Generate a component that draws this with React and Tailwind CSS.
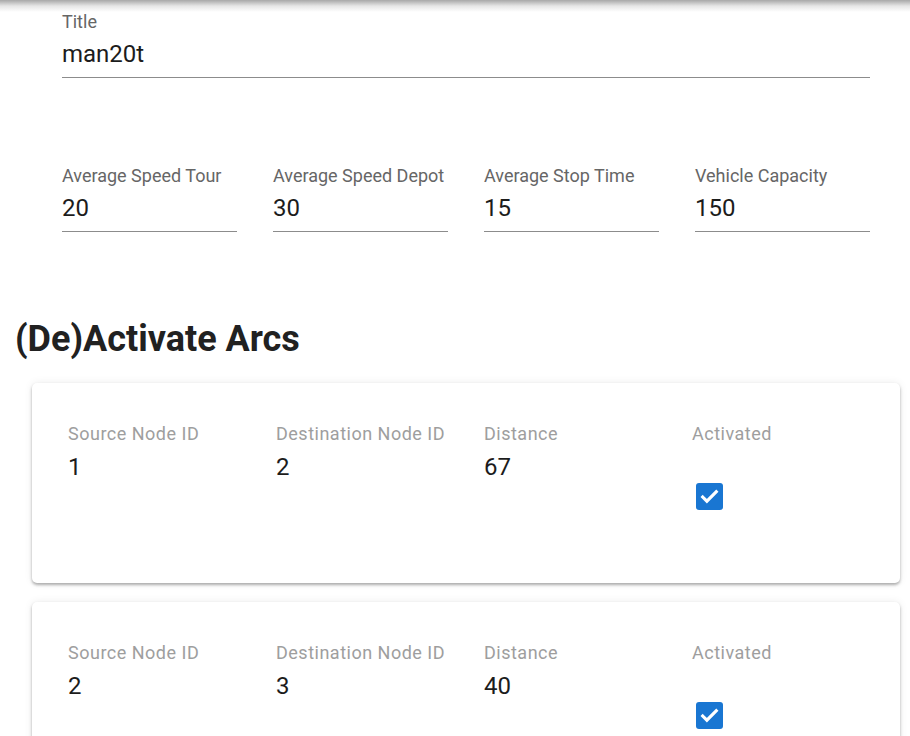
import React from 'react'

const font = { fontFamily: 'Roboto, "Noto Sans", sans-serif' }

const SETTINGS = [
  { label: 'Average Speed Tour', value: '20' },
  { label: 'Average Speed Depot', value: '30' },
  { label: 'Average Stop Time', value: '15' },
  { label: 'Vehicle Capacity', value: '150' }
]

const ARCS = [
  { source: 1, dest: 2, distance: 67, active: true },
  { source: 2, dest: 3, distance: 40, active: true }
]

function Field({ label, value }) {
  return (
    <div className="flex flex-col border-b border-[#8c8c8c]">
      <span className="text-[18px] leading-[22px] text-[#666]">{label}</span>
      <span className="text-[24px] leading-[28px] text-[#1c1c1c] pt-[7px] pb-[9px]">{value}</span>
    </div>
  )
}

function Checkbox({ checked }) {
  return (
    <div className="w-[27px] h-[27px] rounded-[3px] bg-[#1976d2] flex items-center justify-center">
      {checked && (
        <svg viewBox="0 0 24 24" className="w-[25px] h-[25px]" fill="none" stroke="white" strokeWidth="3" strokeLinecap="square">
          <path d="M5.5 12.5l4 4L18.5 7.5" />
        </svg>
      )}
    </div>
  )
}

function ArcCard({ arc }) {
  const cols = [
    { label: 'Source Node ID', value: arc.source },
    { label: 'Destination Node ID', value: arc.dest },
    { label: 'Distance', value: arc.distance }
  ]
  return (
    <div className="bg-white rounded-[5px] shadow-[0_2px_3px_rgba(0,0,0,0.3),0_0_8px_rgba(0,0,0,0.08)] pl-9 pt-[40px] h-[200px]">
      <div className="grid grid-cols-[208px_208px_208px_208px]">
        {cols.map(c => (
          <div key={c.label} className="flex flex-col">
            <span className="text-[18px] leading-[22px] tracking-[0.5px] text-[#9e9e9e]">{c.label}</span>
            <span className="text-[24px] leading-[28px] text-[#1c1c1c] pt-[8px]">{c.value}</span>
          </div>
        ))}
        <div className="flex flex-col">
          <span className="text-[18px] leading-[22px] tracking-[0.5px] text-[#9e9e9e]">Activated</span>
          <div className="pt-[38px] pl-[4px]">
            <Checkbox checked={arc.active} />
          </div>
        </div>
      </div>
    </div>
  )
}

export default function App() {
  return (
    <div className="w-[910px] h-[736px] overflow-hidden bg-white relative" style={font}>
      {/* shadow from app bar above */}
      <div className="absolute top-0 left-0 right-0 h-[12px] bg-gradient-to-b from-[#a8a8a8] via-[#e6e6e6] to-transparent" />

      <div className="px-[62px] pt-[11px] w-[932px]">
        <Field label="Title" value="man20t" />
      </div>

      <div className="grid grid-cols-4 gap-[36px] pl-[62px] pr-[40px] pt-[87px]">
        {SETTINGS.map(s => (
          <Field key={s.label} label={s.label} value={s.value} />
        ))}
      </div>

      <h2 className="text-[36px] leading-[40px] font-bold text-[#212121] pl-[15px] pt-[87px] pb-[24px]">
        (De)Activate Arcs
      </h2>

      <div className="flex flex-col gap-[19px] pl-[32px] pr-[10px]">
        {ARCS.map(a => (
          <ArcCard key={a.source} arc={a} />
        ))}
      </div>
    </div>
  )
}
